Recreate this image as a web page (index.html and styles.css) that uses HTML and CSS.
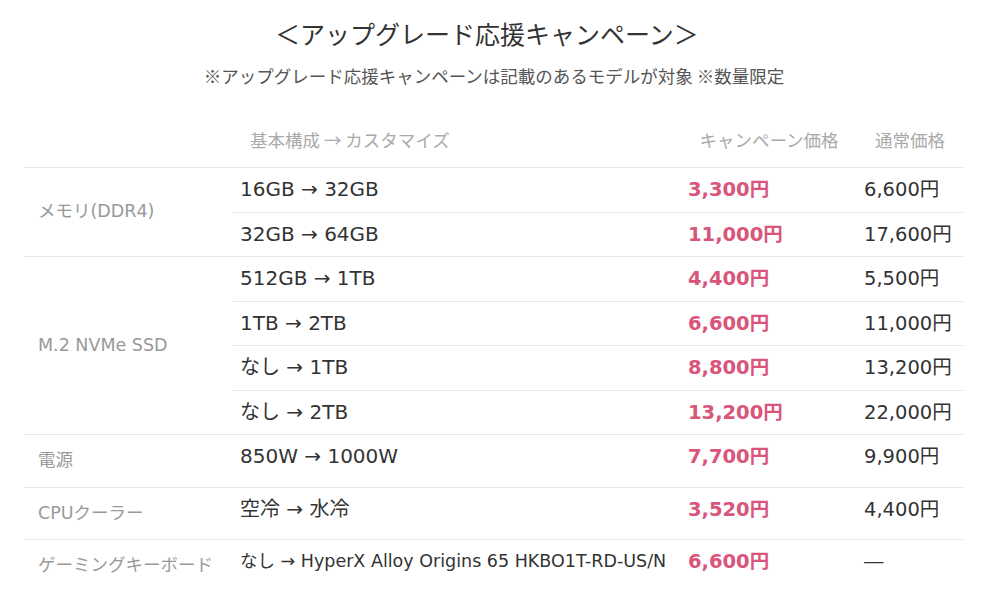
FILE: index.html
```html
<!DOCTYPE html>
<html lang="ja">
<head>
<meta charset="utf-8">
<link rel="stylesheet" href="styles.css">
</head>
<body>
<div class="page">
  <h2 class="title">＜アップグレード応援キャンペーン＞</h2>
  <p class="note">※アップグレード応援キャンペーンは記載のあるモデルが対象 ※数量限定</p>
  <table class="price-table">
    <colgroup>
      <col class="c-label"><col class="c-item"><col class="c-sale"><col class="c-reg">
    </colgroup>
    <thead>
      <tr>
        <th></th>
        <th class="h-item">基本構成 → カスタマイズ</th>
        <th class="h-center">キャンペーン価格</th>
        <th class="h-center">通常価格</th>
      </tr>
    </thead>
    <tbody>
      <tr>
        <td class="label" rowspan="2">メモリ(DDR4)</td>
        <td class="item">16GB → 32GB</td><td class="sale">3,300円</td><td class="reg">6,600円</td>
      </tr>
      <tr><td class="item">32GB → 64GB</td><td class="sale">11,000円</td><td class="reg">17,600円</td></tr>
      <tr>
        <td class="label" rowspan="4">M.2 NVMe SSD</td>
        <td class="item">512GB → 1TB</td><td class="sale">4,400円</td><td class="reg">5,500円</td>
      </tr>
      <tr><td class="item">1TB → 2TB</td><td class="sale">6,600円</td><td class="reg">11,000円</td></tr>
      <tr><td class="item">なし → 1TB</td><td class="sale">8,800円</td><td class="reg">13,200円</td></tr>
      <tr><td class="item">なし → 2TB</td><td class="sale">13,200円</td><td class="reg">22,000円</td></tr>
      <tr class="tall">
        <td class="label">電源</td>
        <td class="item">850W → 1000W</td><td class="sale">7,700円</td><td class="reg">9,900円</td>
      </tr>
      <tr class="tall">
        <td class="label">CPUクーラー</td>
        <td class="item">空冷 → 水冷</td><td class="sale">3,520円</td><td class="reg">4,400円</td>
      </tr>
      <tr class="tall">
        <td class="label">ゲーミングキーボード</td>
        <td class="item small">なし → HyperX Alloy Origins 65 HKBO1T-RD-US/N</td><td class="sale">6,600円</td><td class="reg">―</td>
      </tr>
    </tbody>
  </table>
</div>
</body>
</html>
```

FILE: styles.css
```css
html, body {
  margin: 0;
  padding: 0;
  background: #ffffff;
}
body {
  font-family: "DejaVu Sans", "Noto Sans CJK JP", sans-serif;
  color: #333333;
}
.page {
  width: 1000px;
  padding-top: 16px;
}
.title {
  margin: 0;
  padding-right: 26px;
  text-align: center;
  font-family: "Noto Sans CJK JP", sans-serif;
  font-weight: 400;
  font-size: 25px;
  line-height: 34px;
  color: #333;
}
.note {
  margin: 13px 0 0;
  padding-right: 12px;
  text-align: center;
  font-family: "Noto Sans CJK JP", sans-serif;
  font-size: 17.5px;
  line-height: 26px;
  color: #555;
}
.price-table {
  margin: 23px 0 0 24px;
  width: 939px;
  border-collapse: collapse;
  table-layout: fixed;
}
.c-label { width: 209px; }
.c-item { width: 448px; }
.c-sale { width: 176px; }
.c-reg { width: 106px; }
.price-table th {
  font-weight: 400;
  font-size: 17.5px;
  color: #aaaaaa;
  height: 55px;
  padding: 0;
  vertical-align: middle;
  font-family: "Noto Sans CJK JP", sans-serif;
}
.price-table th.h-item { text-align: left; padding-left: 17px; }
.h-center { text-align: center; }
.price-table td {
  border-top: 1px solid #e6e6e6;
  padding: 8px 7px 8.5px;
  font-size: 19.5px;
  line-height: 27px;
  vertical-align: top;
  white-space: nowrap;
}
.price-table td.item { font-size: 20px; }
.price-table td.item.small { font-size: 17.5px; }
.price-table td.label {
  vertical-align: middle;
  font-size: 17.5px;
  color: #999999;
  padding: 12px 7px 12.5px 14px;
}
.sale {
  color: #d9557a;
  font-weight: 700;
}
.reg { color: #333; }
.item { color: #333; }
```
